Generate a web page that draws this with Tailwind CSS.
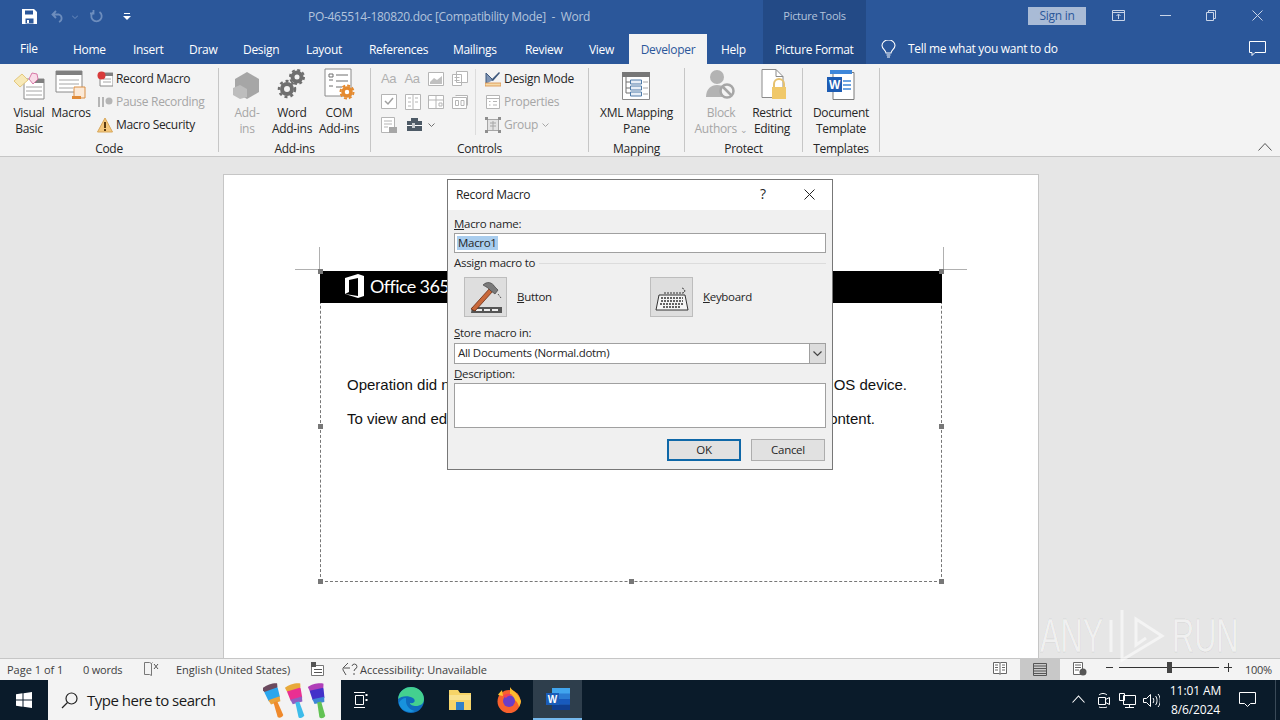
<!DOCTYPE html>
<html lang="en">
<head>
    <meta charset="UTF-8">
    <title>PO-465514-180820.doc [Compatibility Mode] - Word</title>
    <script src="https://cdn.jsdelivr.net/npm/@tailwindcss/browser@4"></script>
</head>
<body class="w-[1280px] h-[720px] overflow-hidden relative flex flex-col font-['Open_Sans',sans-serif] text-[12px] tracking-[-0.3px] text-[#262626] bg-[#e6e6e6]">

    <!-- title bar + tabs -->
    <header class="h-[64px] bg-[#2b579a] text-white relative shrink-0">
        <div class="h-[34px] flex items-center relative">
            <svg class="absolute left-[22px] top-[9px] w-[15px] h-[15px]" viewBox="0 0 15 15"><path d="M0 0h12l3 3v12H0z" fill="#fff"/><path d="M3 1.500h8v4H3zM3.500 9.500h8v5h-8z" fill="#2b579a"/><path d="M5 11h2v3H5z" fill="#fff"/></svg>
            <svg class="absolute left-[51px] top-[10px] w-[14px] h-[13px]" viewBox="0 0 14 13" fill="none" stroke="#6d8dbd" stroke-width="1.800"><path d="M5 1 1.500 4.500 5 8M2 4.500h6a4 4 0 0 1 0 7.500"/></svg>
            <svg class="absolute left-[72px] top-[15px] w-[6px] h-[4px]" viewBox="0 0 6 4" fill="none" stroke="#6d8dbd"><path d="m0 .5 3 3 3-3"/></svg>
            <svg class="absolute left-[90px] top-[10px] w-[13px] h-[13px]" viewBox="0 0 13 13" fill="none" stroke="#6d8dbd" stroke-width="1.800"><path d="M9.500 2a5.200 5.200 0 1 1-6 0M3.500 0v3.500H0"/></svg>
            <svg class="absolute left-[123px] top-[13px] w-[8px] h-[8px]" viewBox="0 0 8 8" fill="#fff"><path d="M1 0h6v1H1zM0 3h8L4 7z"/></svg>
            <p class="absolute left-[308px] top-[9px] leading-[16px] text-[#b3c4dc] whitespace-pre">PO-465514-180820.doc [Compatibility Mode]  -  Word</p>
            <div class="absolute left-[1028px] top-[7px] w-[58px] h-[18px] bg-[#a9bbd6] text-[#2b579a] text-center leading-[18px]">Sign in</div>
            <svg class="absolute left-[1112px] top-[10px] w-[13px] h-[11px]" viewBox="0 0 13 11" fill="none" stroke="#c9d5e8"><path d="M.500.500h12v10H.500zM.500 2.500h12M6.500 9V4.500M4.500 6l2-2 2 2"/></svg>
            <div class="absolute left-[1160px] top-[15px] w-[11px] h-px bg-[#c9d5e8]"></div>
            <svg class="absolute left-[1206px] top-[10px] w-[10px] h-[11px]" viewBox="0 0 10 11" fill="none" stroke="#c9d5e8"><path d="M.500 2.500h7v8h-7zM2.500 2.500v-2h7v8h-2"/></svg>
            <svg class="absolute left-[1252px] top-[10px] w-[11px] h-[11px]" viewBox="0 0 11 11" fill="none" stroke="#c9d5e8"><path d="m.500.500 10 10M10.500.500l-10 10"/></svg>
        </div>
        <div class="absolute left-[763px] top-0 w-[103px] h-[64px] bg-[#234a86]">
            <p class="text-center text-[11px] leading-[16px] mt-[8px] text-[#b3c4dc]">Picture Tools</p>
        </div>
        <nav class="absolute left-0 top-[34px] h-[30px] w-full">
            <span class="absolute left-[20px] top-[6px]">File</span>
            <span class="absolute left-[73px] top-[7px]">Home</span>
            <span class="absolute left-[133px] top-[7px]">Insert</span>
            <span class="absolute left-[189px] top-[7px]">Draw</span>
            <span class="absolute left-[243px] top-[7px]">Design</span>
            <span class="absolute left-[306px] top-[7px]">Layout</span>
            <span class="absolute left-[369px] top-[7px]">References</span>
            <span class="absolute left-[453px] top-[7px]">Mailings</span>
            <span class="absolute left-[525px] top-[7px]">Review</span>
            <span class="absolute left-[589px] top-[7px]">View</span>
            <span class="absolute left-[629px] top-0 w-[78px] h-[30px] bg-[#f3f3f3] text-[#2b579a] text-center pt-[7px]">Developer</span>
            <span class="absolute left-[721px] top-[7px]">Help</span>
            <span class="absolute left-[775px] top-[7px]">Picture Format</span>
            <svg class="absolute left-[881px] top-[6px] w-[15px] h-[18px]" viewBox="0 0 15 18" fill="none" stroke="#fff" stroke-width="1.100"><path d="M5 13c0-3-4-4-4-7.500a6.500 5.500 0 0 1 13 0C14 9 10 10 10 13zM5.500 15h4M6 17h3"/></svg>
            <span class="absolute left-[908px] top-[6px]">Tell me what you want to do</span>
            <svg class="absolute left-[1249px] top-[7px] w-[17px] h-[15px]" viewBox="0 0 17 15" fill="none" stroke="#fff"><path d="M.500.500h16v11H6l-3 3v-3H.500z"/></svg>
        </nav>
    </header>

    <!-- ribbon -->
    <section class="h-[93px] shrink-0 bg-[#f3f3f3] border-b border-[#c6c6c6] flex relative">
        <!-- Code -->
        <div class="w-[218px] h-[92px] flex flex-col">
            <div class="flex h-[77px] pl-[9px]">
                <div class="w-[40px] flex flex-col items-center">
                    <svg class="mt-[6px] w-[32px] h-[30px]" viewBox="0 0 32 30"><path d="M11 9h20v20H11z" fill="#fff" stroke="#8a8a8a"/><path d="M22 9h9v4h-9z" fill="#808080"/><path d="M13 17h16M13 21h16M13 25h16" stroke="#a6a6a6"/><path d="m1 11 8-7 6 6-8 7z" fill="#f7e9b8" stroke="#e3c77d"/><path d="m16 9 3-6 5 1 1 5-5 5z" fill="#f9dbe8" stroke="#d87aa8"/></svg>
                    <p class="leading-[16px] text-center mt-[5px]">Visual<br>Basic</p>
                </div>
                <div class="w-[44px] flex flex-col items-center">
                    <svg class="mt-[6px] w-[32px] h-[30px]" viewBox="0 0 32 30"><path d="M1 1h26v21H1z" fill="#fff" stroke="#8a8a8a"/><path d="M1 1h26v4H1z" fill="#808080"/><path d="M4 10h20M4 14h20M4 18h14" stroke="#a6a6a6"/><path d="M19 17h11v11H19z" fill="#fbe9d7" stroke="#d98e44"/><path d="M17 26h9v3h-9z" fill="#e08a37"/></svg>
                    <p class="leading-[16px] text-center mt-[5px]">Macros</p>
                </div>
                <div class="flex flex-col pt-[3px] ml-[4px]">
                    <div class="h-[23px] flex items-center gap-[3px] whitespace-nowrap">
                        <svg class="w-[16px] h-[16px]" viewBox="0 0 16 16"><path d="M3 2h13v13H3z" fill="#fff" stroke="#8a8a8a"/><path d="M3 2h13v3H3z" fill="#808080"/><path d="M6 8h8M6 11h8" stroke="#a6a6a6"/><circle cx="4.500" cy="4.500" r="4" fill="#d83b3b"/></svg>
                        <span>Record Macro</span>
                    </div>
                    <div class="h-[23px] flex items-center gap-[3px] whitespace-nowrap text-[#a6a6a6]">
                        <svg class="w-[16px] h-[16px]" viewBox="0 0 16 16" fill="#b5b5b5"><path d="M1 3h2v10H1zM5 3h2v10H5z"/><circle cx="12" cy="7" r="3.500"/></svg>
                        <span>Pause Recording</span>
                    </div>
                    <div class="h-[23px] flex items-center gap-[3px] whitespace-nowrap">
                        <svg class="w-[16px] h-[16px]" viewBox="0 0 16 16"><path d="M8 1 15.500 15H.500z" fill="#f4c77c" stroke="#d8a75a"/><path d="M7 5h2v6H7zM7 12h2v2H7z" fill="#5a3a10"/></svg>
                        <span>Macro Security</span>
                    </div>
                </div>
            </div>
            <p class="h-[15px] leading-[16px] text-center">Code</p>
        </div>
        <div class="w-px h-[84px] mt-[4px] bg-[#c6c6c6]"></div>

        <!-- Add-ins -->
        <div class="w-[151px] h-[92px] flex flex-col">
            <div class="flex h-[77px] pl-[8px]">
                <div class="w-[40px] flex flex-col items-center text-[#a6a6a6]">
                    <svg class="mt-[6px] w-[30px] h-[30px]" viewBox="0 0 30 30"><path d="m15 2 12 7v13l-12 7-12-7V9z" fill="#a6a6a6"/><path d="m8 15 7 4v8l-7 2-7-4v-7z" fill="#bdbdbd"/></svg>
                    <p class="leading-[16px] text-center mt-[5px]">Add-<br>ins</p>
                </div>
                <div class="w-[50px] flex flex-col items-center">
                    <svg class="mt-[4px] w-[32px] h-[32px]" viewBox="0 0 32 32" fill="none" stroke="#6f6f6f"><circle cx="21" cy="9" r="4.500" stroke-width="4"/><circle cx="21" cy="9" r="7" stroke-width="2" stroke-dasharray="3 2.500"/><circle cx="11" cy="21" r="5" stroke-width="4"/><circle cx="11" cy="21" r="8" stroke-width="2.500" stroke-dasharray="3 3"/></svg>
                    <p class="leading-[16px] text-center mt-[5px] whitespace-nowrap">Word<br>Add-ins</p>
                </div>
                <div class="w-[44px] flex flex-col items-center">
                    <svg class="mt-[4px] w-[32px] h-[32px]" viewBox="0 0 32 32"><path d="M2 1h26v27H2z" fill="#fff" stroke="#8a8a8a"/><path d="M6 6h4v3H6zM6 12h4M6 18h4" fill="none" stroke="#6f6f6f"/><path d="M13 7h12M13 13h12M13 19h6" stroke="#6f6f6f"/><circle cx="24" cy="24" r="4" fill="none" stroke="#e58a2e" stroke-width="3.500"/><circle cx="24" cy="24" r="6.500" fill="none" stroke="#e58a2e" stroke-width="2" stroke-dasharray="3 2"/></svg>
                    <p class="leading-[16px] text-center mt-[5px] whitespace-nowrap">COM<br>Add-ins</p>
                </div>
            </div>
            <p class="h-[15px] leading-[16px] text-center">Add-ins</p>
        </div>
        <div class="w-px h-[84px] mt-[4px] bg-[#c6c6c6]"></div>

        <!-- Controls -->
        <div class="w-[217px] h-[92px] flex flex-col">
            <div class="flex h-[77px] pt-[3px] pl-[10px]">
                <div class="grid grid-cols-4 grid-rows-3 w-[94px] h-[69px] items-center text-[#b0b0b0]">
                    <span class="text-[13px] leading-none font-['Liberation_Sans',sans-serif]">Aa</span>
                    <span class="text-[13px] leading-none font-['Liberation_Sans',sans-serif]">Aa</span>
                    <svg class="w-[16px] h-[14px]" viewBox="0 0 16 14"><path d="M.500.500h15v13H.500z" fill="#fff" stroke="#b5b5b5"/><path d="M2 10 6 6l3 2 5-4v8H2z" fill="#c0c0c0"/></svg>
                    <svg class="w-[16px] h-[15px]" viewBox="0 0 16 15" fill="#fff" stroke="#b5b5b5"><path d="M4.500.500h11v11h-11zM.500 3.500h9v11h-9zM2.500 6.500h5M2.500 9.500h5"/></svg>
                    <svg class="w-[16px] h-[15px]" viewBox="0 0 16 15"><path d="M.500.500h15v14H.500z" fill="#fff" stroke="#b5b5b5"/><path d="m4 7 3 3 5-6" fill="none" stroke="#a0a0a0" stroke-width="1.500"/></svg>
                    <svg class="w-[16px] h-[16px]" viewBox="0 0 16 16" fill="#fff" stroke="#b5b5b5"><path d="M.500.500h15v15H.500zM8 .500v15M3 4h3M3 8h3M3 12h3M10 4h3M10 8h3"/></svg>
                    <svg class="w-[16px] h-[14px]" viewBox="0 0 16 14" fill="#fff" stroke="#b5b5b5"><path d="M.500.500h15v13H.500zM8 .500v13M.500 5h15M11 8h3v3h-3z"/></svg>
                    <svg class="w-[16px] h-[14px]" viewBox="0 0 16 14" fill="#fff" stroke="#b5b5b5"><path d="M.500 2.500h14v11H.500zM3.500 5.500h3v5h-3zM9 5.500h3v5H9zM3.500.500h12v10"/></svg>
                    <svg class="w-[16px] h-[16px]" viewBox="0 0 16 16"><path d="M.500.500h13v15H.500z" fill="#fff" stroke="#b5b5b5"/><path d="M3 4h8M3 7h8M3 10h4" stroke="#b5b5b5"/><path d="M8 10h8v6H8z" fill="#a6a6a6"/></svg>
                    <div class="col-span-2 flex items-center gap-[5px] pl-[1px]">
                        <svg class="w-[17px] h-[15px]" viewBox="0 0 17 15"><path d="M5 1h7v3h4v10H1V4h4z" fill="#4d5a66"/><path d="M1 8h15v1H1z" fill="#fff"/><path d="M6 6h3v5H6z" fill="#c8ccd0"/></svg>
                        <svg class="w-[7px] h-[4px]" viewBox="0 0 7 4" fill="none" stroke="#6f6f6f"><path d="m.500.500 3 3 3-3"/></svg>
                    </div>
                </div>
                <div class="w-px h-[66px] mt-[2px] bg-[#dcdcdc]"></div>
                <div class="flex flex-col ml-[9px]">
                    <div class="h-[23px] flex items-center gap-[3px] whitespace-nowrap">
                        <svg class="w-[16px] h-[16px]" viewBox="0 0 16 16"><path d="M1 13 1 2l7 7" fill="#7f95b5" stroke="#3e587d"/><path d="m6 9 8-8 1 1-7 8z" fill="#3e587d"/><path d="M0 12h16v3H0z" fill="#f4d9a8" stroke="#d98e44" stroke-width=".800"/></svg>
                        <span>Design Mode</span>
                    </div>
                    <div class="h-[23px] flex items-center gap-[3px] whitespace-nowrap text-[#a6a6a6]">
                        <svg class="w-[16px] h-[16px]" viewBox="0 0 16 16" fill="#fff" stroke="#b5b5b5"><path d="M1.500 1.500h13v13h-13zM1.500 4.500h13M4 7.500h1.500M8 7.500h4M4 11h1.500M8 11h4"/></svg>
                        <span>Properties</span>
                    </div>
                    <div class="h-[23px] flex items-center gap-[3px] whitespace-nowrap text-[#a6a6a6]">
                        <svg class="w-[16px] h-[16px]" viewBox="0 0 16 16"><path d="M2.500 2.500h11v11h-11z" fill="#e3e3e3" stroke="#a6a6a6"/><path d="M0 0h3v3H0zM13 0h3v3h-3zM0 13h3v3H0zM13 13h3v3h-3z" fill="#8f8f8f"/><path d="M5 6h6M5 9h6M8 4v9" stroke="#a6a6a6"/></svg>
                        <span>Group</span>
                        <svg class="w-[7px] h-[4px] ml-[1px]" viewBox="0 0 7 4" fill="none" stroke="#a6a6a6"><path d="m.500.500 3 3 3-3"/></svg>
                    </div>
                </div>
            </div>
            <p class="h-[15px] leading-[16px] text-center">Controls</p>
        </div>
        <div class="w-px h-[84px] mt-[4px] bg-[#c6c6c6]"></div>

        <!-- Mapping -->
        <div class="w-[95px] h-[92px] flex flex-col items-center">
            <div class="h-[77px] flex flex-col items-center">
                <svg class="mt-[8px] w-[28px] h-[28px]" viewBox="0 0 28 28"><path d="M.500.500h27v27H.500z" fill="#fff" stroke="#8a8a8a"/><path d="M0 0h28v5H0z" fill="#777"/><path d="M4 5v16M4 10h4M4 16h4M4 21h4" stroke="#6f6f6f" fill="none"/><path d="M8.500 8h11v4h-11zM8.500 14h11v4h-11zM8.500 20h11v4h-11z" fill="#e7eef6" stroke="#4f7ba8"/><path d="M21 10h5M21 16h5M21 22h5" stroke="#a6a6a6"/></svg>
                <p class="leading-[16px] text-center mt-[5px] whitespace-nowrap">XML Mapping<br>Pane</p>
            </div>
            <p class="h-[15px] leading-[16px] text-center">Mapping</p>
        </div>
        <div class="w-px h-[84px] mt-[4px] bg-[#c6c6c6]"></div>

        <!-- Protect -->
        <div class="w-[117px] h-[92px] flex flex-col">
            <div class="flex h-[77px] pl-[9px]">
                <div class="w-[54px] flex flex-col items-center text-[#a6a6a6]">
                    <svg class="mt-[5px] w-[32px] h-[31px]" viewBox="0 0 32 31"><circle cx="12" cy="8" r="7" fill="#b3b3b3"/><path d="M1 28c0-8 5-12 11-12s8 3 9 6l-3 6z" fill="#b3b3b3"/><circle cx="22" cy="22" r="6.500" fill="#f3f3f3" stroke="#a6a6a6" stroke-width="2.500"/><path d="m18 18 8 8" stroke="#a6a6a6" stroke-width="2.500"/></svg>
                    <p class="leading-[16px] text-center mt-[5px] whitespace-nowrap">Block<br>Authors <span class="text-[9px]">⌄</span></p>
                </div>
                <div class="w-[46px] flex flex-col items-center ml-[1px]">
                    <svg class="mt-[5px] w-[30px] h-[31px]" viewBox="0 0 30 31"><path d="M5 .500h14l7 7v21H5z" fill="#fff" stroke="#8a8a8a"/><path d="M19 .500v7h7" fill="none" stroke="#8a8a8a"/><path d="M17 18v-3a5 5 0 0 1 10 0v3" fill="none" stroke="#e5c16f" stroke-width="2"/><path d="M15 18h14v12H15z" fill="#f0c869"/></svg>
                    <p class="leading-[16px] text-center mt-[5px] whitespace-nowrap">Restrict<br>Editing</p>
                </div>
            </div>
            <p class="h-[15px] leading-[16px] text-center">Protect</p>
        </div>
        <div class="w-px h-[84px] mt-[4px] bg-[#c6c6c6]"></div>

        <!-- Templates -->
        <div class="w-[76px] h-[92px] flex flex-col items-center">
            <div class="h-[77px] flex flex-col items-center">
                <svg class="mt-[6px] w-[28px] h-[30px]" viewBox="0 0 28 30"><path d="M6 2.500h21v27H6z" fill="#fff" stroke="#7a7a7a"/><path d="M3 0h22v4H3z" fill="#3f87d9"/><path d="M16 11h8M16 15h8M16 19h8" stroke="#3f87d9" stroke-width="1.500"/><path d="M0 7h15v15H0z" fill="#1d5cb3"/><text x="7.500" y="19" text-anchor="middle" font-size="12" font-weight="700" fill="#fff" font-family="Liberation Sans">W</text></svg>
                <p class="leading-[16px] text-center mt-[5px] whitespace-nowrap">Document<br>Template</p>
            </div>
            <p class="h-[15px] leading-[16px] text-center">Templates</p>
        </div>
        <div class="w-px h-[84px] mt-[4px] bg-[#c6c6c6]"></div>

        <svg class="absolute left-[1258px] top-[79px] w-[14px] h-[8px]" viewBox="0 0 14 8" fill="none" stroke="#555"><path d="m.500 7.500 6.500-7 6.500 7"/></svg>
    </section>

    <!-- document area -->
    <main class="flex-1 min-h-0 bg-[#e6e6e6] pl-[223px] pt-[17px] overflow-hidden">
        <div class="w-[816px] h-[600px] bg-white border border-[#c6c6c6] relative pt-[96px] pl-[96px]">
            <!-- crop marks -->
            <div class="absolute left-[95px] top-[72px] w-px h-[23px] bg-[#b0b0b0]"></div>
            <div class="absolute left-[71px] top-[94px] w-[25px] h-px bg-[#b0b0b0]"></div>
            <div class="absolute left-[719px] top-[72px] w-px h-[23px] bg-[#b0b0b0]"></div>
            <div class="absolute left-[719px] top-[94px] w-[24px] h-px bg-[#b0b0b0]"></div>
            <!-- picture -->
            <div class="w-[622px] h-[311px] border border-dashed border-[#777] relative">
                <div class="h-[32px] -mx-px -mt-px bg-black flex items-center pl-[25px] gap-[5px] text-white">
                    <svg class="w-[20px] h-[24px] -mt-[2px]" viewBox="0 0 20 24" fill="#fff"><path d="M0 4 13 0l6 2v20l-6 2-13-4 13 2V4L4 6v12l-4 2z"/></svg>
                    <span class="text-[18px] tracking-[-0.6px] -mt-[2px] font-['Lato',sans-serif] whitespace-nowrap">Office 365</span>
                </div>
                <div class="mt-[72px] ml-[26px] w-[560px] flex justify-between font-['Liberation_Sans',sans-serif] text-[15px] tracking-normal leading-[20px] text-[#111]">
                    <span>Operation did not</span><span>iOS device.</span>
                </div>
                <div class="mt-[14px] ml-[26px] w-[528px] flex justify-between font-['Liberation_Sans',sans-serif] text-[15px] tracking-normal leading-[20px] text-[#111]">
                    <span>To view and edit</span><span>content.</span>
                </div>
                <!-- handles -->
                <div class="absolute -left-[3px] -top-[3px] w-[5px] h-[5px] bg-[#777]"></div>
                <div class="absolute left-[308px] -top-[3px] w-[5px] h-[5px] bg-[#777]"></div>
                <div class="absolute -right-[3px] -top-[3px] w-[5px] h-[5px] bg-[#777]"></div>
                <div class="absolute -left-[3px] top-[152px] w-[5px] h-[5px] bg-[#777]"></div>
                <div class="absolute -right-[3px] top-[152px] w-[5px] h-[5px] bg-[#777]"></div>
                <div class="absolute -left-[3px] -bottom-[3px] w-[5px] h-[5px] bg-[#777]"></div>
                <div class="absolute left-[308px] -bottom-[3px] w-[5px] h-[5px] bg-[#777]"></div>
                <div class="absolute -right-[3px] -bottom-[3px] w-[5px] h-[5px] bg-[#777]"></div>
            </div>
        </div>
    </main>

    <!-- status bar -->
    <footer class="h-[22px] shrink-0 bg-[#f3f3f3] border-t border-[#c6c6c6] relative text-[11px] tracking-normal text-[#404040]">
        <span class="absolute left-[7px] top-[3px]">Page 1 of 1</span>
        <span class="absolute left-[83px] top-[3px] tracking-[-0.2px]">0 words</span>
        <svg class="absolute left-[144px] top-[3px] w-[15px] h-[14px]" viewBox="0 0 15 14" fill="none" stroke="#777"><path d="M.500.500h5l2 1v12l-2-1h-5zM7.500 1.500l1-1"/><path d="m10 2 4 5M14 2l-4 5" stroke="#555"/></svg>
        <span class="absolute left-[176px] top-[3px]">English (United States)</span>
        <svg class="absolute left-[311px] top-[3px] w-[13px] h-[14px]" viewBox="0 0 13 14"><path d="M.500 3.500h12v10H.500z" fill="#fff" stroke="#777"/><path d="M0 0h5v5H0zM3 7h8v1H3zM3 10h8v1H3z" fill="#555"/></svg>
        <svg class="absolute left-[342px] top-[3px] w-[16px] h-[15px]" viewBox="0 0 16 15" fill="none" stroke="#555"><path d="M6 1 1 6v2l3 5M10 4a2.500 2.500 0 1 1 3 3l-1 2M12 11v2M2 6h6"/></svg>
        <span class="absolute left-[360px] top-[3px]">Accessibility: Unavailable</span>
        <svg class="absolute left-[993px] top-[3px] w-[14px] h-[13px]" viewBox="0 0 14 13" fill="#fff" stroke="#666"><path d="M.500.500h6l.500 1 .500-1h6v11h-6l-.500 1-.500-1h-6zM7 1.500v10M2 3h3M2 5.500h3M2 8h3M9 3h3M9 5.500h3M9 8h3"/></svg>
        <div class="absolute left-[1020px] -top-px w-[40px] h-[22px] bg-[#c8c8c8] flex items-center justify-center">
            <svg class="w-[14px] h-[13px]" viewBox="0 0 14 13" fill="none" stroke="#555"><path d="M.500.500h13v12H.500zM.500 3h13M.500 5.500h13M.500 8h13M.500 10.500h13"/></svg>
        </div>
        <svg class="absolute left-[1073px] top-[3px] w-[14px] h-[14px]" viewBox="0 0 14 14"><path d="M.500.500h9v12h-9z" fill="#fff" stroke="#666"/><path d="M2 3h6M2 5.500h6M2 8h4" stroke="#666"/><circle cx="10" cy="10" r="3.500" fill="#555"/></svg>
        <div class="absolute left-[1106px] top-[8px] w-[7px] h-px bg-[#333]"></div>
        <div class="absolute left-[1119px] top-[8px] w-[100px] h-px bg-[#333]"></div>
        <div class="absolute left-[1167px] top-[3px] w-[5px] h-[11px] bg-[#444]"></div>
        <div class="absolute left-[1224px] top-[8px] w-[8px] h-px bg-[#333]"></div>
        <div class="absolute left-[1228px] top-[4px] w-px h-[9px] bg-[#333]"></div>
        <span class="absolute left-[1245px] top-[3px] tracking-[-0.3px]">100%</span>
    </footer>

    <!-- taskbar -->
    <nav class="h-[40px] shrink-0 bg-[#0a1b2a] flex items-center text-white relative tracking-normal">
        <div class="w-[48px] h-[40px] flex items-center justify-center">
            <svg class="w-[16px] h-[16px]" viewBox="0 0 16 16" fill="#fff"><path d="m0 2.200 6.500-.9v6.300H0zM7.500 1.200 16 0v7.600H7.500zM0 8.500h6.500v6.200L0 13.800zM7.500 8.500H16V16l-8.500-1.200z"/></svg>
        </div>
        <div class="w-[293px] h-[40px] bg-[#f3f3f3] flex items-center text-[#1a1a1a] relative">
            <svg class="ml-[13px] w-[17px] h-[17px]" viewBox="0 0 17 17" fill="none" stroke="#222" stroke-width="1.200"><circle cx="10.500" cy="6.500" r="5.500"/><path d="M6.500 10.500 1 16"/></svg>
            <span class="ml-[9px] text-[15px] tracking-[-0.5px] whitespace-nowrap">Type here to search</span>
            <svg class="absolute left-[215px] top-[3px] w-[68px] h-[36px]" viewBox="0 0 68 36">
                <g transform="rotate(-20 12 18)"><path d="M5 7c0-3 3-5 7-5s7 2 7 5l-1 9H6z" fill="#2aa6ee"/><path d="M4 2c4-2 12-2 16 0l-1 4H5z" fill="#6b4a5e"/><path d="M6 15h12l-1 5H7z" fill="#e9a23b"/><path d="M10 19h4l1 15c-2 2-5 2-6 0z" fill="#ef8a2c"/></g>
                <g transform="rotate(-16 34 18)"><path d="M27 7c0-3 3-5 7-5s7 2 7 5l-1 9H28z" fill="#ea2f92"/><path d="M26 2c4-2 12-2 16 0l-1 4H27z" fill="#e8a93a"/><path d="M28 15h12l-1 5H29z" fill="#8f5ec2"/><path d="M32 19h4l1 15c-2 2-5 2-6 0z" fill="#3dbcea"/></g>
                <g transform="rotate(-12 56 18)"><path d="M49 7c0-3 3-5 7-5s7 2 7 5l-1 9H50z" fill="#4331c9"/><path d="M48 2c4-2 12-2 16 0l-1 4H49z" fill="#b03fb8"/><path d="M50 15h12l-1 5H51z" fill="#3d86d6"/><path d="M54 19h4l1 15c-2 2-5 2-6 0z" fill="#62c254"/></g>
            </svg>
        </div>
        <svg class="ml-[12px] w-[15px] h-[16px]" viewBox="0 0 15 16" fill="none" stroke="#fff"><path d="M2.500 3.500h8v9h-8zM1 .500h11M1 15.500h11"/><path d="M13.500 2v2M13.500 7v2" stroke-width="2"/></svg>
        <svg class="ml-[30px] w-[26px] h-[26px]" viewBox="0 0 26 26"><circle cx="13" cy="13" r="13" fill="#0f6cbd"/><path d="M0 12C1 3 8 0 13 0c8 0 13 6 13 12 0 5-4 7-8 7-3 0-6-1-6-3 5 1 6-3 3-5C10 8 3 9 0 12z" fill="#44d08f"/><path d="M8 14c0 5 4 9 9 10-7 3-15-1-16-8 1-3 4-5 7-5z" fill="#1892dc"/></svg>
        <svg class="ml-[24px] w-[24px] h-[22px]" viewBox="0 0 24 22"><path d="M1 1h9l2 3h11v17H1z" fill="#f6d468"/><path d="M1 6h22v5H1z" fill="#f9e28f"/><path d="M8 13h8v8H8z" fill="#2f80c9"/></svg>
        <svg class="ml-[24px] w-[26px] h-[26px]" viewBox="0 0 26 26"><circle cx="13" cy="14.500" r="11.500" fill="#f8612d"/><path d="M14 0c1 3 8 5 11 14 0 2-1 4-2 6-1-5-4-8-9-9z" fill="#fdbb2f"/><path d="M2 8c1-2 3-4 4-5l1 6z" fill="#fdc32f"/><circle cx="13" cy="14" r="6" fill="#6a3ec7"/><path d="M7 9c3-3 8-3 10 0-3-1-6 0-7 2z" fill="#f0405a"/></svg>
        <div class="ml-[11px] w-[49px] h-[40px] bg-[#2e3e4c] border-b-2 border-[#76b9ed] flex items-center justify-center">
            <svg class="w-[24px] h-[22px]" viewBox="0 0 24 22"><path d="M6 0h18v22H6z" fill="#2b7cd3"/><path d="M6 0h18v5.500H6z" fill="#41a5ee"/><path d="M6 11h18v5.500H6z" fill="#185abd"/><path d="M6 16.500h18V22H6z" fill="#103f91"/><path d="M0 5h13v12H0z" fill="#1a5cb8"/><text x="6.500" y="15" text-anchor="middle" font-size="10" font-weight="700" fill="#fff" font-family="Liberation Sans">W</text></svg>
        </div>
        <!-- tray -->
        <svg class="absolute left-[1072px] top-[15px] w-[13px] h-[8px]" viewBox="0 0 13 8" fill="none" stroke="#fff" stroke-width="1.100"><path d="m.500 7.500 6-6.500 6 6.500"/></svg>
        <svg class="absolute left-[1097px] top-[13px] w-[14px] h-[15px]" viewBox="0 0 14 15" fill="none" stroke="#fff"><path d="M1.500 4.500h7v7h-7zM8.500 6.500l4-2v7l-4-2M2 2c2-2 6-2 8 0M2 14c2 1 6 1 8 0"/></svg>
        <svg class="absolute left-[1119px] top-[13px] w-[17px] h-[15px]" viewBox="0 0 17 15" fill="none" stroke="#fff"><path d="M4.500 2.500h12v9h-12zM.500.500h5v7h-5zM10.500 11.500v3M6 14.500h9"/></svg>
        <svg class="absolute left-[1143px] top-[13px] w-[17px] h-[15px]" viewBox="0 0 17 15" fill="none" stroke="#fff"><path d="M.500 5.500h3l4-4v12l-4-4h-3zM10 5c1 1 1 4 0 5M12.500 3c2 2 2 7 0 9M15 1c3 3 3 10 0 13"/></svg>
        <div class="absolute left-[1170px] top-[1px] w-[51px] text-[12px] tracking-[-0.1px] leading-[19px] text-center whitespace-nowrap flex flex-col items-center"><span>11:01 AM</span><span>8/6/2024</span></div>
        <svg class="absolute left-[1239px] top-[12px] w-[17px] h-[15px]" viewBox="0 0 17 15" fill="none" stroke="#fff"><path d="M.500.500h16v11h-5l-3 3-3-3h-5z"/></svg>
        <div class="absolute left-[1275px] top-0 w-px h-[40px] bg-[#3a4a58]"></div>
    </nav>

    <!-- Record Macro dialog -->
    <div class="absolute left-[447px] top-[179px] w-[386px] h-[291px] border border-[#777] bg-[#f0f0f0] flex flex-col">
        <div class="h-[30px] bg-white flex items-center pl-[8px] relative shrink-0">
            <span class="text-[#222]">Record Macro</span>
            <span class="absolute left-[312px] top-[4px] text-[14px] leading-[20px]">?</span>
            <svg class="absolute left-[356px] top-[9px] w-[11px] h-[11px]" viewBox="0 0 11 11" fill="none" stroke="#222"><path d="m.500.500 10 10M10.500.500l-10 10"/></svg>
        </div>
        <div class="px-[6px] flex flex-col text-[11.500px]">
            <p class="leading-[16px] mt-[6px] h-[17px]"><u>M</u>acro name:</p>
            <div class="h-[20px] w-[372px] bg-white border border-[#a0a0a0] pl-[2px] flex items-center">
                <span class="bg-[#a9cdee] leading-[14px] px-[1px]">Macro1</span>
            </div>
            <div class="flex items-center h-[20px] gap-[4px]">
                <span class="whitespace-nowrap">Assign macro to</span>
                <div class="flex-1 h-px bg-[#dcdcdc]"></div>
            </div>
            <div class="flex items-center h-[40px] mt-[4px] pl-[10px]">
                <div class="w-[43px] h-[40px] bg-[#dedede] border border-[#bdbdbd] flex items-center justify-center">
                    <svg class="w-[36px] h-[34px]" viewBox="0 0 36 34"><path d="M4 27h30v6H3z" fill="#555"/><path d="M8 29h6v2H8zM16 29h6v2h-6zM24 29h6v2h-6z" fill="#eee"/><path d="m3 29 19-21 3 3L7 31z" fill="#c9683a" stroke="#6b2d14" stroke-width=".800"/><path d="M15 5c4-4 9-3 12 2l3 3-3 4-4-3-3-3c-2-1-3-2-5-3z" fill="#7a7a7a" stroke="#333" stroke-width=".600"/><path d="m30 14 3 4" stroke="#333" stroke-dasharray="1 1"/></svg>
                </div>
                <span class="ml-[10px] w-[133px]"><u>B</u>utton</span>
                <div class="w-[43px] h-[40px] bg-[#dedede] border border-[#bdbdbd] flex items-center justify-center">
                    <svg class="w-[34px] h-[32px]" viewBox="0 0 34 32"><path d="M9 12h19c3-1 2-4-1-5" fill="none" stroke="#333" stroke-dasharray="2 1"/><path d="M4 14h26l3 15H1z" fill="#f5f5f5" stroke="#333"/><path d="M6 17h22M6 20h22M5 23h24M8 26h18" stroke="#333" stroke-width="1.500" stroke-dasharray="2 1"/></svg>
                </div>
                <span class="ml-[10px]"><u>K</u>eyboard</span>
            </div>
            <p class="leading-[16px] mt-[8px] h-[18px]"><u>S</u>tore macro in:</p>
            <div class="h-[21px] w-[372px] bg-white border border-[#a0a0a0] flex items-center pl-[3px] pb-[2px] relative">
                <span>All Documents (Normal.dotm)</span>
                <div class="absolute right-0 top-0 w-[16px] h-[19px] bg-[#dcdcdc] border-l border-[#a0a0a0] flex items-center justify-center">
                    <svg class="w-[9px] h-[6px]" viewBox="0 0 9 6" fill="none" stroke="#444" stroke-width="1.200"><path d="m.500.500 4 4 4-4"/></svg>
                </div>
            </div>
            <p class="leading-[16px] mt-[2px] h-[18px]"><u>D</u>escription:</p>
            <div class="h-[45px] w-[372px] bg-white border border-[#a0a0a0] -mt-[1px]"></div>
            <div class="flex justify-end gap-[10px] mt-[11px] w-[371px]">
                <div class="w-[74px] h-[22px] bg-[#e1e1e1] border-2 border-[#0f68a8] flex items-center justify-center">OK</div>
                <div class="w-[74px] h-[22px] bg-[#e1e1e1] border border-[#adadad] flex items-center justify-center">Cancel</div>
            </div>
        </div>
    </div>

    <!-- ANY.RUN watermark -->
    <div class="absolute left-[1040px] top-[608px] w-[192px] h-[54px] pointer-events-none font-['Liberation_Sans',sans-serif] text-[48px] leading-[54px] tracking-normal text-white/45 [-webkit-text-stroke:1px_rgba(0,0,0,0.07)]">
        <span class="absolute left-0 top-[1px] origin-left scale-x-[0.64]">ANY</span>
        <svg class="absolute left-[68px] top-0 w-[58px] h-[54px]" viewBox="0 0 58 54" fill="none" stroke="#fff" stroke-opacity=".55" stroke-width="3"><path d="M3 12v32M14 2v50l40-24-26-17v26l10-7"/></svg>
        <span class="absolute left-[132px] top-[1px] origin-left scale-x-[0.64]">RUN</span>
    </div>
</body>
</html>
